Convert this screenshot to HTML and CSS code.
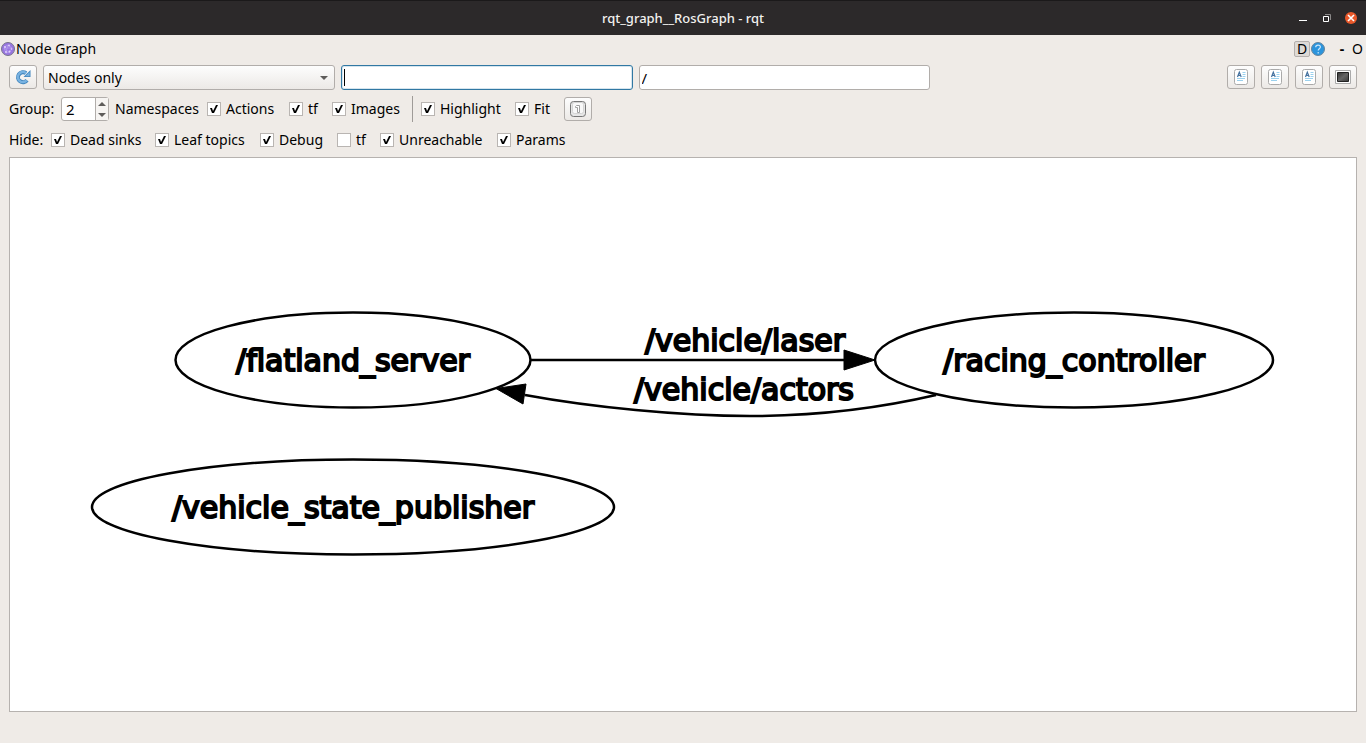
FILE: index.html
```html
<!DOCTYPE html>
<html lang="en">
<head>
<meta charset="utf-8">
<meta name="viewport" content="width=device-width, initial-scale=1">
<title>rqt_graph__RosGraph - rqt</title>
<link rel="stylesheet" href="styles.css">
</head>
<body>
<header class="titlebar">
  <h1 class="window-title">rqt_graph__RosGraph - rqt</h1>
  <div class="window-buttons">
    <button class="window-button" aria-label="Minimize"><svg width="12" height="12" viewBox="0 0 12 12"><path d="M2 8.500h8" stroke="#fff" fill="none"/></svg></button>
    <button class="window-button" aria-label="Restore"><svg width="12" height="12" viewBox="0 0 12 12"><path d="M2.500 4.500h5v5h-5z" stroke="#fff" fill="none"/><path d="M4 2.500h5.500v5.500" stroke="#8a8888" fill="none"/></svg></button>
    <button class="window-button" aria-label="Close"><svg width="12" height="12" viewBox="0 0 12 12"><circle cx="6" cy="6" r="6" fill="#e9582a"/><path d="M3 3l6 6M9 3l-6 6" stroke="#fff" stroke-width="1.600"/></svg></button>
  </div>
</header>

<div class="dock-title">
  <svg class="dock-icon" width="14" height="14" viewBox="0 0 14 14"><circle cx="7" cy="7" r="6.500" fill="#9876df" stroke="#77738c"/><path d="M3 5l4-2 4 3-2 4-4 1-2-5 6 5M7 3l-2 7M11 6H3" stroke="#b79ff0" stroke-width=".7" fill="none"/><g fill="#e2d4fb"><circle cx="4" cy="5" r="1"/><circle cx="8" cy="3.500" r=".9"/><circle cx="10.500" cy="7" r=".8"/><circle cx="8.500" cy="9.500" r=".9"/><circle cx="5" cy="10" r=".9"/></g></svg>
  <h2 class="dock-name">Node Graph</h2>
  <button class="dock-button raised">D</button>
  <button class="dock-help" aria-label="Help"><svg width="14" height="14" viewBox="0 0 14 14"><circle cx="7" cy="7" r="6.500" fill="#2b94dc" stroke="#65849b"/><path d="M4.700 5.300c0-3 4.700-2.900 4.700-.2 0 1.700-2.200 1.700-2.200 3.500M7.200 10v1.500" stroke="#c9e6fa" stroke-width="1.200" fill="none"/></svg></button>
  <button class="dock-button dash">-</button>
  <button class="dock-button last">O</button>
</div>

<main class="panel">
  <div class="toolbar">
    <button class="tool" aria-label="Refresh"><svg width="16" height="16" viewBox="0 0 16 16"><path d="M12 11.200A5 5 0 1 1 11 4.200" stroke="#4286bd" stroke-width="4" fill="none"/><path d="M15.500 1v7H8.500z" fill="#4286bd"/><path d="M11.600 11.400A5 5 0 1 1 11.200 4.300" stroke="#78b2e1" stroke-width="2.400" fill="none"/><path d="M14.600 3v4.200h-4.200z" fill="#78b2e1"/></svg></button>
    <div class="combo field">
      <select class="combo-select" aria-label="Graph type"><option>Nodes only</option><option>Nodes/Topics (active)</option><option>Nodes/Topics (all)</option></select>
      <svg class="combo-arrow" width="8" height="4" viewBox="0 0 8 4"><path d="M0 0h8L4 4z" fill="#5e5c5a"/></svg>
    </div>
    <input class="text field active" type="text" aria-label="Node filter">
    <input class="text field" type="text" value="/" aria-label="Topic filter">
    <div class="spacer"></div>
    <button class="tool" aria-label="Load DOT"><svg width="14" height="16" viewBox="0 0 14 16"><use href="#doc"/></svg></button>
    <button class="tool" aria-label="Save DOT"><svg width="14" height="16" viewBox="0 0 14 16"><use href="#doc"/></svg></button>
    <button class="tool" aria-label="Save SVG"><svg width="14" height="16" viewBox="0 0 14 16"><use href="#doc"/></svg></button>
    <button class="tool" aria-label="Save image"><svg width="16" height="14" viewBox="0 0 16 14"><defs><linearGradient id="screen" x2="1" y2="1"><stop stop-color="#333"/><stop offset=".5" stop-color="#666"/><stop offset="1" stop-color="#3c3c3c"/></linearGradient></defs><path d="M.5.5h15v13H.5z" fill="#fff" stroke="#aaa"/><path d="M2.500 2.500h11v9h-11z" fill="url(#screen)" stroke="#222"/></svg></button>
  </div>

  <div class="options group-options">
    <label for="group">Group:</label>
    <span class="spin"><input id="group" class="spin-value" type="number" value="2"><span class="spin-buttons"><button class="spin-button" aria-label="Increase"><svg width="8" height="4" viewBox="0 0 8 4"><path d="M0 4h8L4 0z" fill="#5e5c5a"/></svg></button><button class="spin-button" aria-label="Decrease"><svg width="8" height="4" viewBox="0 0 8 4"><path d="M0 0h8L4 4z" fill="#5e5c5a"/></svg></button></span></span>
    <label for="group">Namespaces</label>
    <label class="check"><input type="checkbox" checked>Actions</label>
    <label class="check"><input type="checkbox" checked>tf</label>
    <label class="check"><input type="checkbox" checked>Images</label>
    <span class="separator"></span>
    <label class="check"><input type="checkbox" checked>Highlight</label>
    <label class="check"><input type="checkbox" checked>Fit</label>
    <button class="tool" aria-label="Fit in view"><svg width="16" height="16" viewBox="0 0 16 16"><rect x=".5" y=".5" width="15" height="15" rx="3" fill="#e6e6e6" stroke="#777"/><rect x="2.500" y="1.500" width="11" height="11" rx="2" fill="#f8f8f8" stroke="#d4d4d4"/><path d="M5.500 6.500V5.500l1-1h3v7h-2v-5z" fill="#fff" stroke="#a0a0a0"/></svg></button>
  </div>

  <div class="options hide-options">
    <span>Hide:</span>
    <label class="check"><input type="checkbox" checked>Dead sinks</label>
    <label class="check"><input type="checkbox" checked>Leaf topics</label>
    <label class="check"><input type="checkbox" checked>Debug</label>
    <label class="check"><input type="checkbox">tf</label>
    <label class="check"><input type="checkbox" checked>Unreachable</label>
    <label class="check"><input type="checkbox" checked>Params</label>
  </div>

  <div class="canvas">
    <svg class="graph" viewBox="10 158 1346 553" role="img" aria-label="Node graph">
      <defs>
        <g id="doc"><rect x=".5" y=".5" width="13" height="15" rx="2" fill="#fff" stroke="#aaa"/><path d="M3.500 8L5.300 3.200 7.200 8M4 6.500h2.600" stroke="#44719f" stroke-width="1.200" fill="none"/><path d="M8.500 3.500h3M8.500 5.500h3M8.500 7.500h3M3 9.500h8M3 11.500h6" stroke="#9bd1ee" fill="none"/></g>
      </defs>
      <g class="shape">
        <ellipse cx="353" cy="360" rx="177.500" ry="47.500"/>
        <ellipse cx="1074" cy="360" rx="199" ry="47.500"/>
        <ellipse cx="353" cy="507" rx="261" ry="47.500"/>
        <path d="M531 360H845"/>
        <path d="M936 395C880 408 815 416 750 416C680 416 590 407 525 395"/>
      </g>
      <path class="arrow" d="M844 350L875 360 844 370zM496 388.500L526 384 523 404z"/>
      <g class="node-label">
        <text x="353" y="371">/flatland_server</text>
        <text x="1074" y="371">/racing_controller</text>
        <text x="353" y="518">/vehicle_state_publisher</text>
        <text x="745" y="351">/vehicle/laser</text>
        <text x="744" y="400">/vehicle/actors</text>
      </g>
    </svg>
  </div>
</main>
</body>
</html>
```

FILE: styles.css
```css
* { box-sizing: border-box; }

body {
  margin: 0;
  min-height: 100vh;
  display: flex;
  flex-direction: column;
  background: #efebe7;
  color: #000;
  font: 14px/20px "Noto Sans", "Open Sans", sans-serif;
}

button, input, select { font: inherit; color: inherit; margin: 0; }
button { padding: 0; border: 0; background: none; }
svg { display: block; flex: none; }

.titlebar {
  display: grid;
  grid-template-columns: 1fr auto 1fr;
  align-items: center;
  height: 35px;
  padding: 0 9px;
  background: #2c292a;
  border-top: 1px solid #1b191a;
  color: #f2f1ef;
}

.window-title {
  grid-column: 2;
  margin: 0;
  font-size: 13px;
  font-weight: 500;
}

.window-buttons { display: flex; justify-content: flex-end; gap: 12px; }

.dock-title { display: flex; align-items: center; height: 27px; padding: 0 3px 0 1px; }
.dock-name { flex: 1; margin: 0 0 0 1px; font-size: 14px; font-weight: 400; }
.dock-button { height: 16px; line-height: 16px; }
.raised { width: 16px; border: 1px solid #b4b0ad; border-radius: 2px; background: #dedad6; line-height: 14px; }
.dock-help { margin-left: 1px; }
.dash { width: 8px; margin-left: 13px; font-weight: 700; }
.last { margin-left: 6px; }

.panel { flex: 1; display: flex; flex-direction: column; padding: 3px 9px 31px; }

.toolbar {
  display: grid;
  grid-template-columns: 28px repeat(3, minmax(0, 41fr)) minmax(0, 40fr) repeat(4, 28px);
  gap: 6px;
}

.tool {
  display: grid;
  place-items: center;
  width: 28px;
  height: 24px;
  border: 1px solid #b1adaa;
  border-radius: 3px;
  background: linear-gradient(#fdfdfd, #ece9e6);
}

.field { width: 100%; height: 25px; border: 1px solid #b1adaa; border-radius: 3px; }

.combo { display: flex; align-items: center; padding-right: 6px; background: linear-gradient(#fdfdfd, #ece9e6); }
.combo-select { flex: 1; min-width: 0; height: 23px; padding: 0 4px; border: 0; background: none; appearance: none; }

.text { padding: 0 2px; background: #fff; outline: 0; font-size: 15px; }
.active {
  border-color: #3178a3;
  background: linear-gradient(#000, #000) 2px center / 1px 17px no-repeat #fff;
  box-shadow: inset 0 0 0 1px #d6e5ee;
}

.options { display: grid; align-items: center; white-space: nowrap; }
.group-options {
  height: 38px;
  grid-template-columns: 52px 54px 92px 82px 43px 80px 9px 94px 49px 28px;
}
.hide-options {
  height: 24px;
  grid-template-columns: 42px 104px 105px 77px 43px 117px 80px;
}

.check { display: flex; align-items: center; gap: 5px; }
.check input {
  appearance: none;
  width: 14px;
  height: 14px;
  border: 1px solid #b9b5b2;
  background: #fff;
}
.check input:checked::after {
  content: "";
  display: block;
  width: 12px;
  height: 12px;
  background: #000;
  clip-path: polygon(2px 5px, 4px 5px, 5px 8px, 8px 2px, 10px 2px, 6px 10px, 4px 10px);
}

.spin { display: flex; width: 48px; height: 24px; border: 1px solid #b1adaa; border-radius: 3px; background: #fff; }
.spin-value { width: 33px; padding: 0 4px; border: 0; background: none; appearance: textfield; outline: 0; font-size: 15px; }
.spin-value::-webkit-inner-spin-button { appearance: none; }
.spin-buttons { display: grid; flex: 1; border-left: 1px solid #b1adaa; background: #f6f4f2; }
.spin-button { display: grid; place-items: center; }

.separator { width: 1px; height: 26px; background: #9f9b98; }

.canvas { flex: 1; display: flex; min-height: 0; margin-top: 5px; border: 1px solid #b6b2af; background: #fff; }
.graph { flex: 1; width: 100%; min-width: 0; }

.shape { fill: none; stroke: #000; stroke-width: 2.5px; }
.arrow { stroke: #000; }
.node-label {
  font-family: "DejaVu Sans", sans-serif;
  font-size: 30px;
  text-anchor: middle;
  stroke: #000;
  stroke-width: 2px;
}
```
